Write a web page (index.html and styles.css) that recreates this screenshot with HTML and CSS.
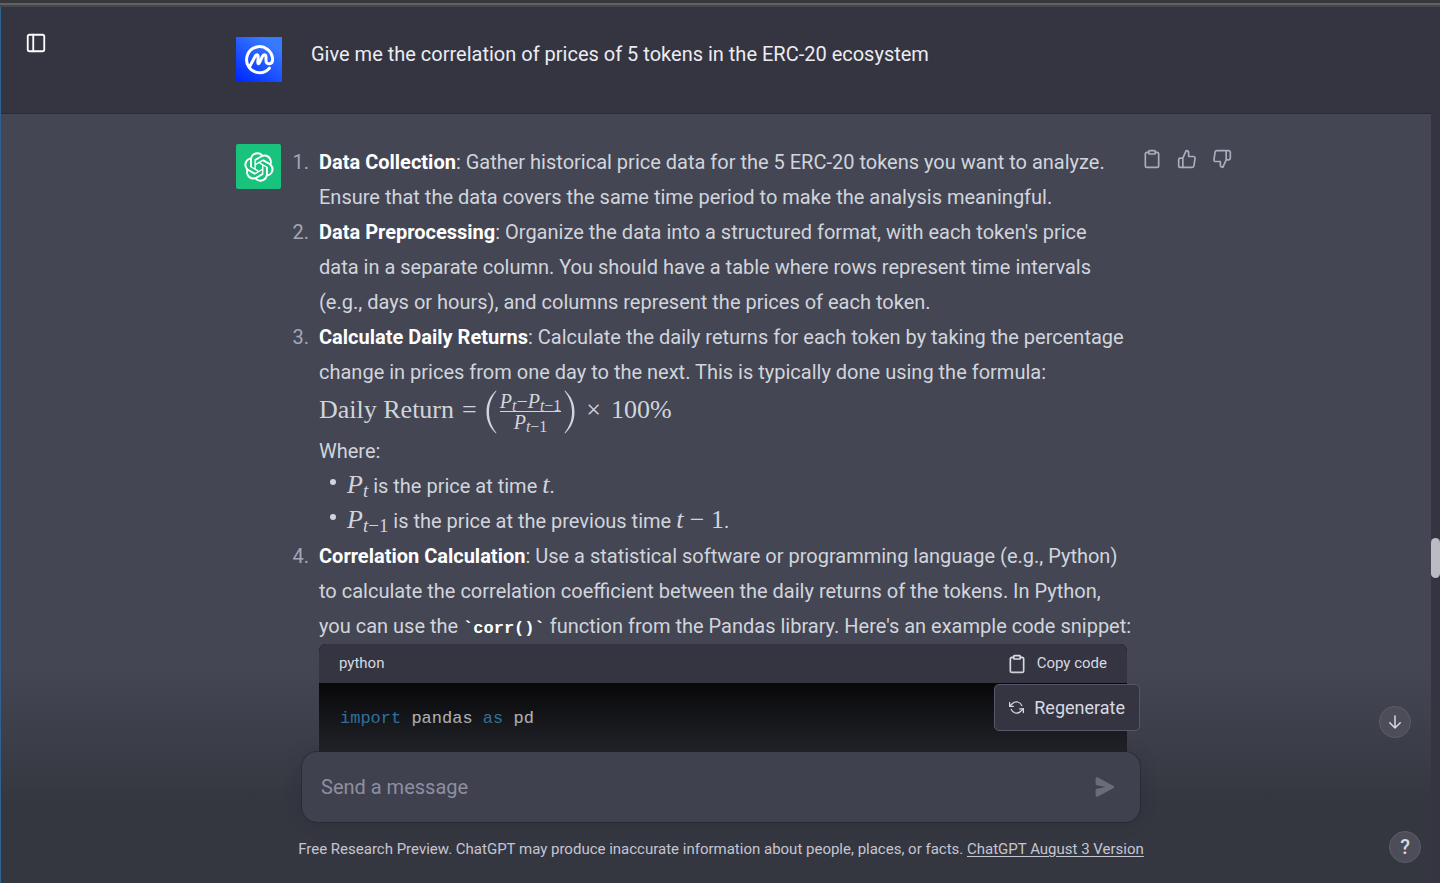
FILE: index.html
```html
<!DOCTYPE html>
<html lang="en">
<head>
<meta charset="utf-8">
<meta name="viewport" content="width=device-width, initial-scale=1">
<title>ChatGPT</title>
<link rel="stylesheet" href="styles.css">
</head>
<body>
<svg class="sprite" aria-hidden="true">
  <symbol id="clipboard" viewBox="0 0 24 24"><path d="M16 4h2a2 2 0 0 1 2 2v14a2 2 0 0 1-2 2H6a2 2 0 0 1-2-2V6a2 2 0 0 1 2-2h2"/><rect x="8" y="2" width="8" height="4" rx="1"/></symbol>
</svg>
<div class="app">
  <div class="window-edge"></div>
  <div class="workspace">
    <main class="thread">
      <section class="turn turn-user">
        <div class="turn-inner">
          <div class="avatar avatar-user">
            <svg viewBox="0 0 46 45" aria-hidden="true"><path d="M33.4 31.2A13 13 0 1 1 36.6 22.5C36.6 28 30 28 30 23.5V20.5C30 17 27.6 16.8 26.3 19.6L23.6 25.4C22.7 27.4 21.7 27 21.8 25.2L22.2 20C22.3 17.2 20.4 17 19.2 19.2L13.8 29.4"/></svg>
          </div>
          <p class="prompt">Give me the correlation of prices of 5 tokens in the ERC-20 ecosystem</p>
        </div>
      </section>
      <section class="turn turn-bot">
        <div class="turn-inner">
          <div class="avatar avatar-bot">
            <svg viewBox="0 0 41 41" aria-hidden="true"><path d="M37.532 16.87a9.963 9.963 0 0 0-.856-8.184 10.078 10.078 0 0 0-10.855-4.835A9.964 9.964 0 0 0 18.306.5a10.079 10.079 0 0 0-9.614 6.977 9.967 9.967 0 0 0-6.664 4.834 10.08 10.08 0 0 0 1.24 11.817 9.965 9.965 0 0 0 .856 8.185 10.079 10.079 0 0 0 10.855 4.835 9.965 9.965 0 0 0 7.516 3.35 10.078 10.078 0 0 0 9.617-6.981 9.967 9.967 0 0 0 6.663-4.834 10.079 10.079 0 0 0-1.243-11.813ZM22.498 37.886a7.474 7.474 0 0 1-4.799-1.735c.061-.033.168-.091.237-.134l7.964-4.6a1.294 1.294 0 0 0 .655-1.134V19.054l3.366 1.944a.12.12 0 0 1 .066.092v9.299a7.505 7.505 0 0 1-7.49 7.496ZM6.392 31.006a7.471 7.471 0 0 1-.894-5.023c.06.036.162.099.237.141l7.964 4.6a1.297 1.297 0 0 0 1.308 0l9.724-5.614v3.888a.12.12 0 0 1-.048.103l-8.051 4.649a7.504 7.504 0 0 1-10.24-2.744ZM4.297 13.62A7.469 7.469 0 0 1 8.2 10.333c0 .068-.004.19-.004.274v9.201a1.294 1.294 0 0 0 .654 1.132l9.723 5.614-3.366 1.944a.12.12 0 0 1-.114.01L7.04 23.856a7.504 7.504 0 0 1-2.743-10.237Zm27.658 6.437-9.724-5.615 3.367-1.943a.121.121 0 0 1 .113-.01l8.052 4.648a7.498 7.498 0 0 1-1.158 13.528v-9.476a1.293 1.293 0 0 0-.65-1.132Zm3.35-5.043c-.059-.037-.162-.099-.236-.141l-7.965-4.6a1.298 1.298 0 0 0-1.308 0l-9.723 5.614v-3.888a.12.12 0 0 1 .048-.103l8.05-4.645a7.497 7.497 0 0 1 11.135 7.763Zm-21.063 6.929-3.367-1.944a.12.12 0 0 1-.065-.092v-9.299a7.497 7.497 0 0 1 12.293-5.756 6.94 6.94 0 0 0-.236.134l-7.965 4.6a1.294 1.294 0 0 0-.654 1.132l-.006 11.225Zm1.829-3.943 4.33-2.501 4.332 2.5v5l-4.331 2.5-4.331-2.5V18Z"/></svg>
          </div>
          <div class="answer">
            <ol class="steps">
              <li><strong>Data Collection</strong>: Gather historical price data for the 5 ERC-20 tokens you want to analyze. Ensure that the data covers the same time period to make the analysis meaningful.</li>
              <li><strong>Data Preprocessing</strong>: Organize the data into a structured format, with each token's price data in a separate column. You should have a table where rows represent time intervals (e.g., days or hours), and columns represent the prices of each token.</li>
              <li><strong>Calculate Daily Returns</strong>: Calculate the daily returns for each token by taking the percentage change in prices from one day to the next. This is typically done using the formula:
                <div class="formula">
                  <span>Daily Return</span><span class="relation">=</span>
                  <svg class="paren" viewBox="0 0 12 44" aria-hidden="true"><path d="M11 .5C5 6 1.500 13 1.500 22S5 38 11 43.500L11.500 43C7 37 4 31 4 22S7 7 11.500 1Z"/></svg>
                  <span class="fraction"><span class="over"><i>P<sub>t</sub></i>−<i>P<sub>t</sub></i><sub>−1</sub></span><span class="under"><i>P<sub>t</sub></i><sub>−1</sub></span></span>
                  <svg class="paren" viewBox="0 0 12 44" aria-hidden="true"><path d="M1 .5C7 6 10.500 13 10.500 22S7 38 1 43.500L.5 43C5 37 8 31 8 22S5 7 .5 1Z"/></svg>
                  <span class="times">×</span><span>100%</span>
                </div>
                <div>Where:</div>
                <ul class="terms">
                  <li><span class="math"><i>P<sub>t</sub></i></span> is the price at time <span class="math"><i>t</i></span>.</li>
                  <li><span class="math"><i>P<sub>t</sub></i><sub>−1</sub></span> is the price at the previous time <span class="math minus"><i>t</i> − 1</span>.</li>
                </ul>
              </li>
              <li><strong>Correlation Calculation</strong>: Use a statistical software or programming language (e.g., Python) to calculate the correlation coefficient between the daily returns of the tokens. In Python, <span class="keep">you can use the <code>`corr()`</code> function from the Pandas library. Here's an example code snippet:</span>
                <div class="snippet">
                  <div class="snippet-head"><span>python</span><button type="button" class="copy"><svg class="line-icon" aria-hidden="true"><use href="#clipboard"/></svg>Copy code</button></div>
                  <pre class="snippet-body"><b>import</b> pandas <b>as</b> pd</pre>
                </div>
              </li>
            </ol>
          </div>
          <div class="actions">
            <button type="button" aria-label="Copy"><svg class="line-icon" aria-hidden="true"><use href="#clipboard"/></svg></button>
            <button type="button" aria-label="Good response"><svg class="line-icon" viewBox="0 0 24 24" aria-hidden="true"><path d="M14 9V5a3 3 0 0 0-3-3l-4 9v11h11.280a2 2 0 0 0 2-1.700l1.380-9a2 2 0 0 0-2-2.300zM7 22H4a2 2 0 0 1-2-2v-7a2 2 0 0 1 2-2h3"/></svg></button>
            <button type="button" aria-label="Bad response"><svg class="line-icon" viewBox="0 0 24 24" aria-hidden="true"><path d="M10 15v4a3 3 0 0 0 3 3l4-9V2H5.720a2 2 0 0 0-2 1.700l-1.380 9a2 2 0 0 0 2 2.300zM17 2h2.670A2.310 2.310 0 0 1 22 4v7a2.310 2.310 0 0 1-2.330 2H17"/></svg></button>
          </div>
        </div>
      </section>
    </main>
    <div class="scrollbar"><div class="thumb"></div></div>
    <button type="button" class="sidebar-toggle" aria-label="Show sidebar"><svg class="line-icon" viewBox="0 0 24 24" aria-hidden="true"><rect x="3" y="3" width="18" height="18" rx="2"/><path d="M9 3v18"/></svg></button>
    <footer class="dock">
      <div class="dock-inner">
        <button type="button" class="regenerate"><svg class="line-icon" viewBox="0 0 24 24" aria-hidden="true"><path d="M1 4v6h6M23 20v-6h-6"/><path d="M20.490 9A9 9 0 0 0 5.640 5.640L1 10m22 4l-4.640 4.360A9 9 0 0 1 3.510 15"/></svg>Regenerate</button>
        <form class="composer">
          <input type="text" placeholder="Send a message" aria-label="Send a message">
          <button type="button" class="send" aria-label="Send"><svg viewBox="0 0 16 16" aria-hidden="true"><path d="M.5 1.163A1 1 0 0 1 1.970.28l12.868 6.837a1 1 0 0 1 0 1.766L1.969 15.720A1 1 0 0 1 .5 14.836V10.330a1 1 0 0 1 .816-.983L8.500 8 1.316 6.653A1 1 0 0 1 .5 5.670V1.163Z"/></svg></button>
        </form>
        <p class="notice">Free Research Preview. ChatGPT may produce inaccurate information about people, places, or facts. <a href="#">ChatGPT August 3 Version</a></p>
      </div>
    </footer>
    <button type="button" class="round to-bottom" aria-label="Scroll to bottom"><svg class="line-icon" viewBox="0 0 24 24" aria-hidden="true"><path d="M12 4v16M5 13l7 7 7-7"/></svg></button>
    <button type="button" class="round help" aria-label="Help">?</button>
  </div>
</div>
</body>
</html>
```
FILE: styles.css
```css
* { box-sizing: border-box; }

body {
  margin: 0;
  background: #343541;
  color: #d1d5db;
  font-family: Roboto, "Liberation Sans", sans-serif;
  font-size: 20px;
  line-height: 35px;
}

p, ol, ul, pre { margin: 0; padding: 0; }
button {
  padding: 0;
  border: 0;
  background: none;
  color: inherit;
  font: inherit;
  cursor: pointer;
}
.sprite { position: absolute; width: 0; height: 0; }
.line-icon {
  display: block;
  width: 20px;
  height: 20px;
  fill: none;
  stroke: currentColor;
  stroke-width: 2;
  stroke-linecap: round;
  stroke-linejoin: round;
}

.app {
  display: flex;
  flex-direction: column;
  height: 100vh;
  overflow: hidden;
}
.window-edge {
  flex: none;
  height: 7px;
  background: #454650;
  border-top: 3px solid #37383b;
  box-shadow: inset 0 2px #606165;
}
.workspace {
  position: relative;
  display: flex;
  flex: 1;
  min-height: 0;
  border-left: 1px solid #2d6391;
}

.thread { flex: 1; min-width: 0; overflow: hidden; background: #444654; }
.turn { padding: 30px 0 30px 36px; }
.turn-user { background: #343541; border-bottom: 1px solid #2b2c34; }
.turn-inner {
  display: grid;
  grid-template-columns: 45px minmax(0, 1fr) 90px;
  max-width: 996px;
  min-height: 46px;
  margin: 0 auto;
}
.avatar {
  display: flex;
  align-items: center;
  justify-content: center;
  width: 45px;
  height: 45px;
}
.avatar-user { width: 46px; background: linear-gradient(215deg, #3779ff 20%, #0029ff 95%); }
.avatar-user svg {
  width: 46px;
  height: 45px;
  fill: none;
  stroke: #fff;
  stroke-width: 3;
  stroke-linecap: round;
  stroke-linejoin: round;
}
.avatar-bot { background: #19c37d; border-radius: 2px; }
.avatar-bot svg { width: 30px; height: 30px; fill: #fff; }
.prompt { padding-left: 30px; color: #ececf1; }

@counter-style step {
  system: extends decimal;
  suffix: ".\00a0\00a0";
}
.steps { padding-left: 38px; list-style: step; }
.steps > li::marker { color: #a5a5b8; }
.answer { margin: 1px 15px 0 0; }
.keep { white-space: nowrap; }
strong, code { color: #fff; font-weight: 700; }
code, .snippet-body { font-family: "Liberation Mono", monospace; font-size: 17px; }
code { line-height: 20px; }

.formula {
  display: flex;
  align-items: center;
  height: 44px;
}
.formula, .math { font-family: "Liberation Serif", serif; font-size: 26px; line-height: 24px; }
.formula > span { padding-bottom: 4px; }
.math sub, .formula sub { font-size: 19px; line-height: 0; vertical-align: -4px; }
.minus { word-spacing: normal; }
.relation { margin: 0 8px; }
.times { margin: 0 10px; }
.paren { width: 12px; height: 44px; fill: currentColor; }
.formula > .fraction {
  display: flex;
  flex-direction: column;
  margin: 0 3px;
  padding-bottom: 2px;
  font-size: 20px;
  line-height: 20px;
  text-align: center;
}
.fraction sub { font-size: 16px; vertical-align: -3px; }
.over { border-bottom: 1px solid currentColor; }

.terms { list-style: none; }
.terms li { position: relative; padding-left: 28px; }
.terms li::before {
  content: "";
  position: absolute;
  left: 11px;
  top: 10px;
  width: 6px;
  height: 6px;
  border-radius: 50%;
  background: currentColor;
}

.snippet { overflow: hidden; border-radius: 7px; background: #000; }
.snippet-head {
  display: flex;
  align-items: center;
  justify-content: space-between;
  height: 39px;
  padding: 0 20px;
  background: #343541;
  color: #d9d9e3;
  font-size: 15px;
}
.copy { display: flex; align-items: center; gap: 10px; }
.snippet-body { padding: 18px 21px 60px; color: #fff; }
.snippet-body b { color: #2e95d3; font-weight: 400; }

.actions { display: flex; gap: 15px; height: 20px; margin-top: 5px; color: #acacbe; }

.scrollbar { width: 9px; padding-top: 531px; background: #343541; }
.thumb { height: 40px; border-radius: 5px; background: #bbbbc6; }

.sidebar-toggle { position: absolute; left: 24px; top: 25px; color: #fff; }
.sidebar-toggle .line-icon { width: 22px; height: 22px; }

.dock {
  position: absolute;
  left: 0;
  right: 9px;
  bottom: 0;
  padding: 20px 0 22px 10px;
  background: linear-gradient(rgba(53, 55, 64, 0), #353740 62%);
}
.dock-inner {
  display: flex;
  flex-direction: column;
  max-width: 838px;
  margin: 0 auto;
}
.regenerate {
  display: flex;
  align-items: center;
  align-self: flex-end;
  gap: 10px;
  height: 47px;
  padding: 0 14px;
  border: 1px solid #565869;
  border-radius: 5px;
  background: #343541;
  color: #d9d9e3;
  font-size: 18px;
}
.regenerate .line-icon { width: 15px; height: 15px; }
.composer {
  display: flex;
  align-items: center;
  height: 70px;
  margin-top: 21px;
  padding: 0 25px 0 19px;
  border-radius: 15px;
  background: #40414f;
  box-shadow: 0 0 0 1px rgba(32, 33, 35, .4), 0 0 19px rgba(0, 0, 0, .1);
}
.composer input {
  flex: 1;
  min-width: 0;
  padding: 0;
  border: 0;
  outline: 0;
  background: none;
  color: #fff;
  font: inherit;
}
.composer input::placeholder { color: #8e8ea0; opacity: 1; }
.send svg { display: block; width: 20px; height: 20px; fill: #6b6c7b; }
.notice {
  margin: 15px -10px 0;
  color: #c5c5d2;
  font-size: 15px;
  line-height: 24px;
  text-align: center;
}
.notice a { color: inherit; text-underline-offset: 2px; }

.round {
  position: absolute;
  display: flex;
  align-items: center;
  justify-content: center;
  width: 32px;
  height: 32px;
  border: 1px solid #5d5d68;
  border-radius: 50%;
  background: #4d4d5a;
  color: #d9d9e3;
}
.round .line-icon { width: 18px; height: 18px; }
.to-bottom { right: 29px; bottom: 145px; }
.help { right: 19px; bottom: 20px; font-weight: 500; }
```
